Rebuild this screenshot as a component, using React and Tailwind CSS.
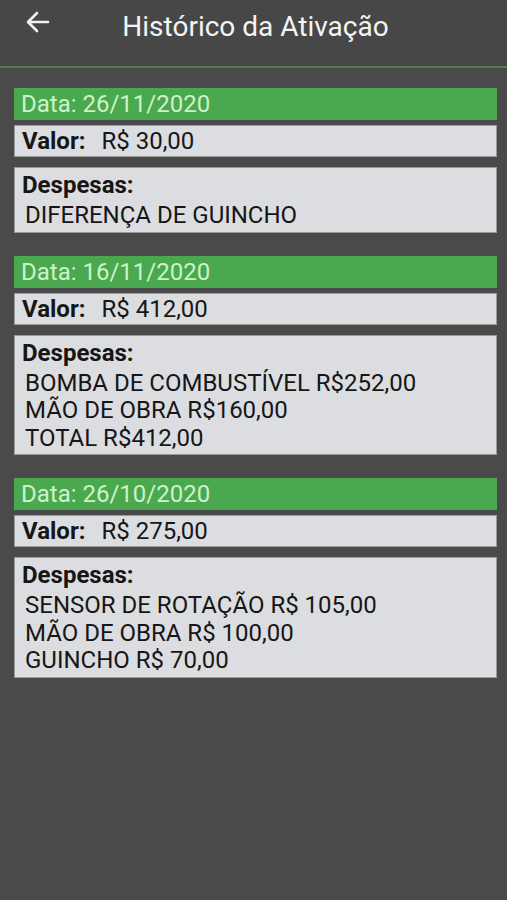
import React from "react";

const entries = [
  { date: "26/11/2020", valor: "R$ 30,00", itens: ["DIFERENÇA DE GUINCHO"] },
  {
    date: "16/11/2020",
    valor: "R$ 412,00",
    itens: ["BOMBA DE COMBUSTÍVEL R$252,00", "MÃO DE OBRA R$160,00", "TOTAL R$412,00"],
  },
  {
    date: "26/10/2020",
    valor: "R$ 275,00",
    itens: ["SENSOR DE ROTAÇÃO R$ 105,00", "MÃO DE OBRA R$ 100,00", "GUINCHO R$ 70,00"],
  },
];

export default function App() {
  return (
    <div
      className="w-[507px] h-[900px] bg-[#4a4a4a] overflow-hidden"
      style={{ fontFamily: "Roboto, 'Liberation Sans', sans-serif" }}
    >
      <div className="h-[66px] bg-[#474747] flex items-start relative">
        <svg
          className="absolute left-[26px] top-[11px]"
          width="24"
          height="22"
          viewBox="0 0 24 22"
          fill="none"
          stroke="#f2f2f2"
          strokeWidth="2.6"
          strokeLinecap="round"
          strokeLinejoin="round"
        >
          <path d="M22 11H3M11 2L2 11l9 9" />
        </svg>
        <div className="w-full text-center pt-[10px] pl-[4px] text-[28px] leading-[34px] text-[#f4f4f4]">
          Histórico da Ativação
        </div>
      </div>
      <div className="h-[2px] bg-[#4f7d52]" />
      <div className="pt-[20px] pl-[14px] pr-[10px] flex flex-col gap-[23px]">
        {entries.map((e) => (
          <div key={e.date} className="flex flex-col">
            <div className="h-[32px] bg-[#4aa84f] px-[7px] text-[24px] leading-[32px] text-[#cdf3c8]">
              Data: {e.date}
            </div>
            <div className="mt-[5px] h-[32px] bg-[#dcdde0] border border-[#9a9a9a] px-[7px] text-[24px] leading-[31px] text-[#161616]">
              <span className="font-bold">Valor:</span>
              <span className="ml-[16px]">{e.valor}</span>
            </div>
            <div className="mt-[10px] bg-[#dcdde0] border border-[#9a9a9a] px-[7px] pb-[2px] text-[24px] text-[#161616]">
              <div className="font-bold leading-[30px] pt-[2px]">Despesas:</div>
              <div className="pl-[3px] pt-[2px] leading-[27.5px]">
                {e.itens.map((it) => (
                  <div key={it}>{it}</div>
                ))}
              </div>
            </div>
          </div>
        ))}
      </div>
    </div>
  );
}
